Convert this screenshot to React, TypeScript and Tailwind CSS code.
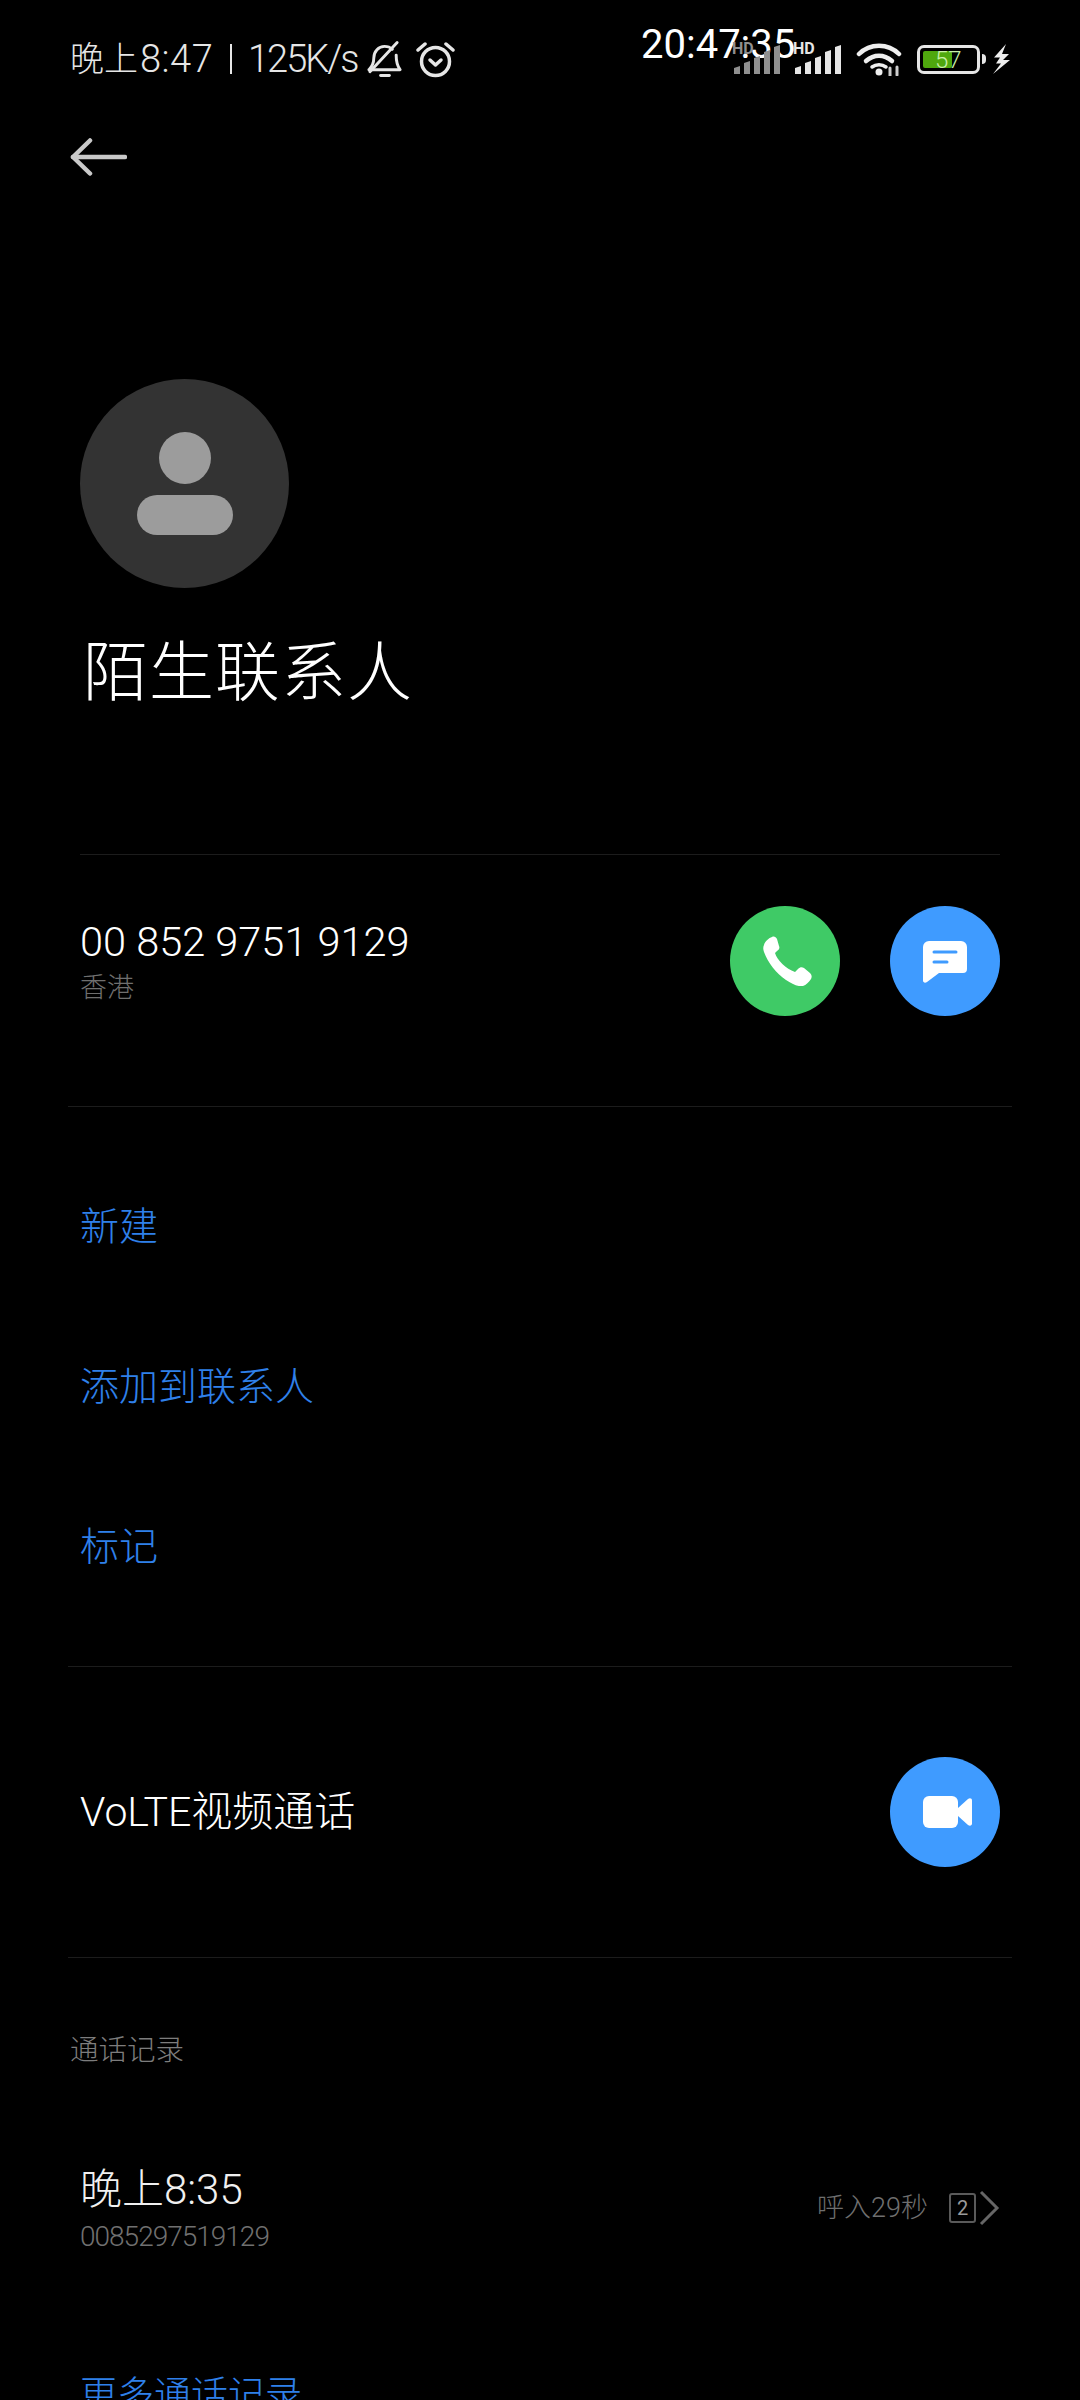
import React from "react";

const FONT = "font-['Roboto','Noto_Sans_CJK_SC',sans-serif]";

function StatusBar() {
  return (
    <div className="relative flex h-[116px] items-center justify-between pl-[70px] pr-[69px] pt-[2px]">
      <div className="flex items-center font-light text-[#e6e6e6] whitespace-nowrap">
        <span className="w-[70px] text-[34px] leading-[44px]">晚上</span>
        <span className="w-[74px] text-[38px] leading-[44px] tracking-[0.5px]">8:47</span>
        <span className="ml-[16px] h-[30px] w-[2px] bg-[#e6e6e6]" />
        <span className="ml-[16px] w-[110px] text-[38px] leading-[44px] tracking-[-2px]">125K/s</span>
        {/* muted bell */}
        <svg className="ml-[9px]" width="35" height="38" viewBox="0 0 36 38" fill="none" stroke="#e6e6e6" strokeWidth="3" strokeLinecap="round" strokeLinejoin="round">
          <path d="M2 30h32M2 30c3-3 5-6 5-12 0-7 5-12 11-12 3 0 6 1 8 3M30 15c0 7 1 11 4 15" />
          <path d="M3 32L31 2" />
          <path d="M14 36h9" />
        </svg>
        {/* alarm */}
        <svg className="ml-[14px]" width="39" height="37" viewBox="0 0 39 37" fill="none" stroke="#e6e6e6" strokeWidth="3.500" strokeLinecap="round" strokeLinejoin="round">
          <circle cx="19.500" cy="20.500" r="14" />
          <path d="M14 19l5.500 5 5.500-5" />
          <path d="M2 9l7-6M37 9l-7-6" />
        </svg>
      </div>
      <div className="absolute left-[641px] top-[22px] text-[40px] leading-[46px] font-normal text-white">20:47:35</div>
      <div className="flex items-end">
        <SignalBars color="#8f8f8f" />
        <div className="w-[15px]" />
        <SignalBars color="#e6e6e6" />
        {/* wifi */}
        <svg className="ml-[15px]" width="46" height="33" viewBox="0 0 46 33" fill="none" strokeLinecap="round">
          <path d="M3 11C14 0 32 0 43 11" stroke="#eeeeee" strokeWidth="4.500" />
          <path d="M10 18c8-7 18-7 26 0" stroke="#eeeeee" strokeWidth="4.500" />
          <path d="M16 24c4-3 10-3 14 0" stroke="#eeeeee" strokeWidth="3.500" />
          <circle cx="23" cy="29" r="3.500" fill="#eeeeee" />
          <path d="M34 25v8M41 24v8" stroke="#cccccc" strokeWidth="3" />
        </svg>
        {/* battery */}
        <div className="ml-[15px] mb-[2px] flex items-center">
          <div className="relative h-[29px] w-[63px] rounded-[7px] border-[3px] border-[#e6e6e6] p-[3px]">
            <div className="h-full w-[29px] rounded-[2px] bg-[#4fa80e]" />
            <span className="absolute left-[15px] top-[-3px] text-[24px] leading-[30px] font-light text-[#c9f0a8]">57</span>
          </div>
          <div className="ml-[2px] h-[10px] w-[4px] rounded-r-full bg-[#e6e6e6]" />
        </div>
        {/* charging bolt */}
        <svg className="ml-[7px] mb-[2px]" width="18" height="30" viewBox="0 0 18 30" fill="#eeeeee">
          <path d="M13 0L1 13.500h6L3 19.500h5L0 30l17-14h-7l6-6H9z" />
        </svg>
      </div>
    </div>
  );
}

function SignalBars({ color }: { color: string }) {
  return (
    <div className="relative mb-[2px] flex h-[31px] items-end gap-[4px]">
      {[8, 13, 18, 24, 29].map((h) => (
        <svg key={h} width="6" height={h} viewBox={`0 0 6 ${h}`} fill={color} className="block">
          <path d={`M0 ${h}V2L6 0V${h}Z`} />
        </svg>
      ))}
      <span className="absolute left-[-2px] top-[-2px] text-[16px] leading-[15px] font-bold" style={{ color }}>
        HD
      </span>
    </div>
  );
}

function RoundButton({ color, children }: { color: string; children: React.ReactNode }) {
  return (
    <div className="flex h-[110px] w-[110px] items-center justify-center rounded-full" style={{ backgroundColor: color }}>
      {children}
    </div>
  );
}

function ActionLink({ label }: { label: string }) {
  return (
    <div className="flex h-[160px] items-center text-[39px] leading-[46px] font-light text-[#2f80ea]">{label}</div>
  );
}

export default function App() {
  return (
    <div className={`h-[2400px] w-[1080px] overflow-hidden bg-black ${FONT}`}>
      <StatusBar />

      {/* back */}
      <div className="pl-[70px] pt-[22px]">
        <svg width="57" height="38" viewBox="0 0 57 38" fill="none" stroke="#c9c9c9" strokeWidth="4.500" strokeLinecap="round" strokeLinejoin="round" className="block">
          <path d="M3 19h52" />
          <path d="M20 2.500L3 19l17 16.500" />
        </svg>
      </div>

      {/* avatar and name */}
      <div className="mt-[203px] pl-[80px]">
        <div className="flex h-[209px] w-[209px] flex-col items-center justify-center rounded-full bg-[#333333]">
          <div className="h-[52px] w-[52px] rounded-full bg-[#9c9c9c]" />
          <div className="mt-[11px] h-[40px] w-[96px] rounded-full bg-[#9c9c9c]" />
        </div>
        <div className="mt-[41px] pl-[3px] text-[65px] leading-[88px] font-light tracking-[1px] text-white">陌生联系人</div>
      </div>

      <div className="mx-[80px] mt-[137px] h-[1px] bg-[#1c1c1c]" />

      {/* number */}
      <div className="flex h-[251px] items-center justify-between px-[80px] pb-[39px]">
        <div>
          <div className="text-[41.500px] leading-[50px] font-light text-white">00 852 9751 9129</div>
          <div className="mt-[4px] text-[27px] leading-[34px] font-light text-[#6f6f6f]">香港</div>
        </div>
        <div className="flex gap-[50px]">
          <RoundButton color="#3fca66">
            <svg width="50" height="50" viewBox="0 0 50 50" fill="#ffffff" className="ml-[4px]">
              <path d="M2 9C3 5 7 2 10 1C12 0 14 1 15 3L17 10C18 12 17 14 15 15L13 17C15 24 24 33 33 36L36 33C38 31 40 31 42 32L48 37C50 39 50 41 49 43C47 46 44 49 41 50C36 51 30 48 24 44C14 37 6 27 2 16C1 13 1 11 2 9Z" />
            </svg>
          </RoundButton>
          <RoundButton color="#3f9bff">
            <svg width="44" height="42" viewBox="0 0 44 42" className="mt-[2px]">
              <path d="M6 0h32a6 6 0 0 1 6 6v22a4 4 0 0 1-4 4H16L4 41c-2 1.500-4 .5-4-1.500V6a6 6 0 0 1 6-6z" fill="#ffffff" />
              <path d="M11 11h22" stroke="#3f9bff" strokeWidth="3" strokeLinecap="round" />
              <path d="M11 21h13" stroke="#3f9bff" strokeWidth="3" strokeLinecap="round" />
            </svg>
          </RoundButton>
        </div>
      </div>

      <div className="mx-[68px] h-[1px] bg-[#1c1c1c]" />

      <div className="pl-[80px] pt-[40px] pb-[39px]">
        <ActionLink label="新建" />
        <ActionLink label="添加到联系人" />
        <ActionLink label="标记" />
      </div>

      <div className="mx-[68px] h-[1px] bg-[#1c1c1c]" />

      {/* video call */}
      <div className="flex h-[290px] items-center justify-between px-[80px]">
        <div className="text-[41px] leading-[48px] font-light text-white">VoLTE视频通话</div>
        <RoundButton color="#3f9bff">
          <svg width="49" height="32" viewBox="0 0 49 32" fill="#ffffff" className="ml-[5px]">
            <rect x="0" y="0" width="35" height="32" rx="6" />
            <path d="M35 12L45 3c2-1.500 4-.5 4 1.500v23c0 2-2 3-4 1.500L35 20z" />
          </svg>
        </RoundButton>
      </div>

      <div className="mx-[68px] h-[1px] bg-[#1c1c1c]" />

      {/* call log */}
      <div className="pl-[70px] pt-[74px] text-[28.500px] leading-[38px] font-light text-[#7d7d7d]">通话记录</div>

      <div className="mt-[95px] flex items-center justify-between px-[80px]">
        <div>
          <div className="text-[42px] leading-[50px] font-light text-[#f0f0f0]">晚上8:35</div>
          <div className="mt-[4px] text-[28px] leading-[36px] tracking-[-1px] font-light text-[#707070]">0085297519129</div>
        </div>
        <div className="mb-[4px] flex items-center">
          <span className="text-[27px] leading-[34px] font-light text-[#6f6f6f]">呼入29秒</span>
          <div className="ml-[21px] flex h-[30px] w-[27px] items-center justify-center rounded-[3px] border-[2px] border-[#5a5a5a] text-[20px] leading-[20px] text-[#9a9a9a]">2</div>
          <svg width="22" height="36" viewBox="0 0 22 36" fill="none" stroke="#666666" strokeWidth="3" className="ml-[2px]">
            <path d="M3 2l16 16L3 34" />
          </svg>
        </div>
      </div>

      <div className="mt-[118px] pl-[80px] text-[37px] leading-[46px] font-light text-[#2f80ea]">更多通话记录</div>
    </div>
  );
}
